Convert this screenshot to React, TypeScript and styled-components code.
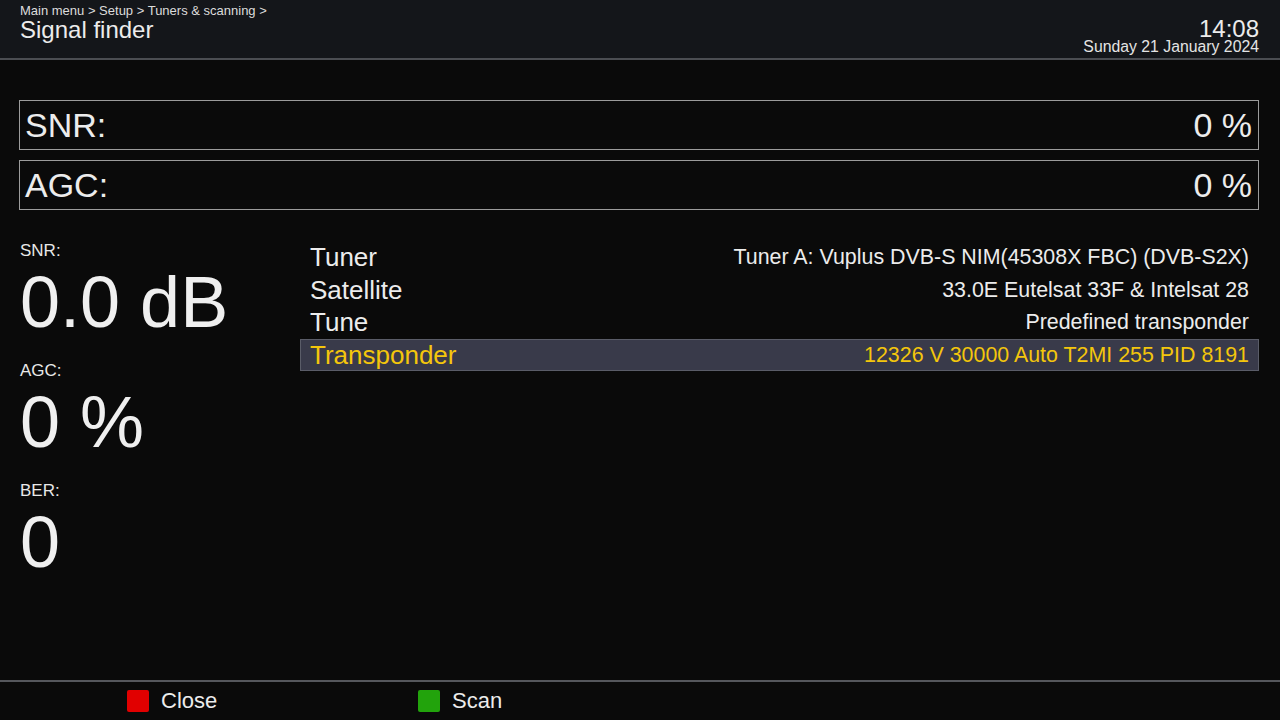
import styled, { createGlobalStyle } from "styled-components";

const GlobalStyle = createGlobalStyle`
	html, body {
		margin: 0;
		padding: 0;
		background: #0a0a0a;
	}
	body {
		font-family: "Liberation Sans", Arial, sans-serif;
		color: #e8e8e8;
	}
`;

const Screen = styled.div`
	width: 1280px;
	height: 720px;
	display: flex;
	flex-direction: column;
	background: #0a0a0a;
	overflow: hidden;
`;

const Header = styled.div`
	height: 58px;
	flex-shrink: 0;
	display: flex;
	justify-content: space-between;
	padding: 0 21px 0 20px;
	background: #14161a;
	border-bottom: 2px solid #4b4d52;
`;

const TitleBlock = styled.div`
	display: flex;
	flex-direction: column;
	padding-top: 4px;
`;

const Breadcrumb = styled.div`
	font-size: 13px;
	line-height: 13px;
	color: #dcdcdc;
	white-space: nowrap;
`;

const Title = styled.div`
	font-size: 24px;
	line-height: 26px;
	color: #ececec;
`;

const Clock = styled.div`
	display: flex;
	flex-direction: column;
	align-items: flex-end;
	padding-top: 18px;
`;

const Time = styled.div`
	font-size: 24px;
	line-height: 22px;
	color: #ececec;
`;

const DateLine = styled.div`
	font-size: 15.8px;
	line-height: 14px;
	color: #e4e4e4;
	white-space: nowrap;
`;

const Body = styled.div`
	flex-grow: 1;
	display: flex;
	flex-direction: column;
	padding: 40px 21px 0 19px;
`;

const Bars = styled.div`
	display: flex;
	flex-direction: column;
	gap: 10px;
`;

const LevelBar = styled.div`
	height: 48px;
	display: flex;
	justify-content: space-between;
	align-items: center;
	padding: 0 6px 0 5px;
	border: 1px solid #9c9c9c;
	font-size: 34px;
	line-height: 48px;
	color: #ececec;
`;

const Lower = styled.div`
	display: flex;
	margin-top: 30px;
`;

const Readouts = styled.div`
	width: 281px;
	flex-shrink: 0;
	display: flex;
	flex-direction: column;
	padding-left: 1px;
	padding-top: 1px;
	box-sizing: border-box;
`;

const Readout = styled.div`
	display: flex;
	flex-direction: column;
	height: 120px;
`;

const ReadoutLabel = styled.div`
	font-size: 17px;
	line-height: 20px;
	color: #e8e8e8;
`;

const ReadoutValue = styled.div`
	margin-top: 1px;
	font-size: 72px;
	line-height: 80px;
	color: #efefef;
	white-space: nowrap;
`;

const ConfigList = styled.div`
	flex-grow: 1;
	display: flex;
	flex-direction: column;
	padding-top: 1px;
`;

const Row = styled.div<{ $selected?: boolean }>`
	height: 32.5px;
	box-sizing: border-box;
	display: flex;
	justify-content: space-between;
	align-items: center;
	padding: 0 9px;
	border: 1px solid ${(p) => (p.$selected ? "#5a5c68" : "transparent")};
	background: ${(p) => (p.$selected ? "#393a4a" : "transparent")};
	color: ${(p) => (p.$selected ? "#f4c60c" : "#ececec")};
`;

const RowLabel = styled.span`
	font-size: 26px;
	line-height: 30px;
	white-space: nowrap;
`;

const RowValue = styled.span`
	font-size: 21.4px;
	line-height: 30px;
	white-space: nowrap;
`;

const Footer = styled.div`
	height: 38px;
	flex-shrink: 0;
	display: flex;
	align-items: center;
	padding-left: 127px;
	border-top: 2px solid #55575c;
	background: #0a0a0a;
`;

const KeyHint = styled.div`
	width: 291px;
	display: flex;
	align-items: center;
	gap: 12px;
	font-size: 22px;
	color: #ececec;
`;

const ColorKey = styled.span<{ $color: string }>`
	width: 22px;
	height: 22px;
	border-radius: 2px;
	background: ${(p) => p.$color};
`;

const rows = [
	{ label: "Tuner", value: "Tuner A: Vuplus DVB-S NIM(45308X FBC) (DVB-S2X)" },
	{ label: "Satellite", value: "33.0E Eutelsat 33F & Intelsat 28" },
	{ label: "Tune", value: "Predefined transponder" },
	{ label: "Transponder", value: "12326 V 30000 Auto T2MI 255 PID 8191", selected: true },
];

const readouts = [
	{ label: "SNR:", value: "0.0 dB" },
	{ label: "AGC:", value: "0 %" },
	{ label: "BER:", value: "0" },
];

const App = () => {
	return (
		<Screen>
			<GlobalStyle />
			<Header>
				<TitleBlock>
					<Breadcrumb>Main menu &gt; Setup &gt; Tuners &amp; scanning &gt;</Breadcrumb>
					<Title>Signal finder</Title>
				</TitleBlock>
				<Clock>
					<Time>14:08</Time>
					<DateLine>Sunday 21 January 2024</DateLine>
				</Clock>
			</Header>
			<Body>
				<Bars>
					<LevelBar>
						<span>SNR:</span>
						<span>0 %</span>
					</LevelBar>
					<LevelBar>
						<span>AGC:</span>
						<span>0 %</span>
					</LevelBar>
				</Bars>
				<Lower>
					<Readouts>
						{readouts.map((r) => (
							<Readout key={r.label}>
								<ReadoutLabel>{r.label}</ReadoutLabel>
								<ReadoutValue>{r.value}</ReadoutValue>
							</Readout>
						))}
					</Readouts>
					<ConfigList>
						{rows.map((r) => (
							<Row key={r.label} $selected={r.selected}>
								<RowLabel>{r.label}</RowLabel>
								<RowValue>{r.value}</RowValue>
							</Row>
						))}
					</ConfigList>
				</Lower>
			</Body>
			<Footer>
				<KeyHint>
					<ColorKey $color="#e10000" />
					Close
				</KeyHint>
				<KeyHint>
					<ColorKey $color="#22a30c" />
					Scan
				</KeyHint>
			</Footer>
		</Screen>
	);
};

export default App;
